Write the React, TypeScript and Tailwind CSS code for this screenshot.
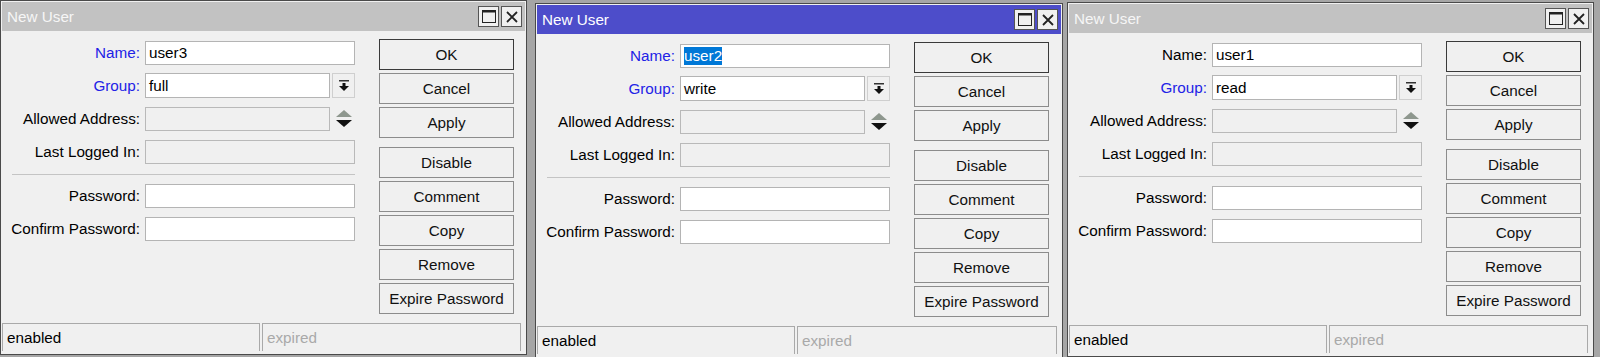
import React from 'react'

type WindowProps = {
  name: string
  group: string
  nameBlue?: boolean
  active?: boolean
  selected?: boolean
  className?: string
}

function MaximizeIcon() {
  return (
    <svg width="14" height="13" viewBox="0 0 14 13">
      <rect x="0.5" y="0.5" width="13" height="12" fill="none" stroke="#222" strokeWidth="1" />
      <rect x="0" y="0" width="14" height="2.5" fill="#222" />
    </svg>
  )
}

function CloseIcon() {
  return (
    <svg width="12" height="12" viewBox="0 0 12 12">
      <path d="M1 1 L11 11 M11 1 L1 11" stroke="#222" strokeWidth="1.8" />
    </svg>
  )
}

function DropIcon() {
  return (
    <svg width="10" height="12" viewBox="0 0 10 12">
      <rect x="0" y="0" width="10" height="1.5" fill="#333" />
      <rect x="3.5" y="3" width="3" height="3" fill="#111" />
      <polygon points="0,6 10,6 5,11" fill="#111" />
    </svg>
  )
}

function SpinIcon() {
  return (
    <svg width="16" height="17" viewBox="0 0 16 17">
      <polygon points="8,0 16,7 0,7" fill="#8e978e" />
      <polygon points="0,10 16,10 8,17" fill="#111" />
    </svg>
  )
}

function Row({ label, blue, children }: { label: string; blue?: boolean; children: React.ReactNode }) {
  return (
    <div className="flex h-[33px] items-center">
      <div className={`w-[138px] text-right ${blue ? 'text-[#2222e6]' : 'text-black'}`}>{label}</div>
      <div className="ml-[5px] flex items-center">{children}</div>
    </div>
  )
}

function Field({ value, disabled, wide = true, selected }: { value?: string; disabled?: boolean; wide?: boolean; selected?: boolean }) {
  return (
    <div
      className={`flex h-[24px] items-center border px-[3px] ${wide ? 'w-[210px]' : 'w-[185px]'} ${
        disabled ? 'border-[#b9b9b9] bg-[#f0f0f0]' : 'border-[#b4b4b4] bg-white'
      }`}
    >
      {value && (
        <span className={selected ? 'bg-[#0078d7] text-white' : 'text-black'}>{value}</span>
      )}
    </div>
  )
}

function Btn({ label, primary }: { label: string; primary?: boolean }) {
  return (
    <div
      className={`flex h-[31px] w-[135px] items-center justify-center border bg-[#f0f0f0] text-[#111] ${
        primary ? 'border-[#3a3a3a]' : 'border-[#8c8c8c]'
      }`}
    >
      {label}
    </div>
  )
}

function UserWindow({ name, group, nameBlue, active, selected, className }: WindowProps) {
  return (
    <div className={`flex h-[355px] shrink-0 flex-col border border-[#4a4a4a] bg-[#f0f0f0] p-px ${className ?? ''}`}>
      {/* Title bar */}
      <div className={`flex h-[29px] items-center justify-between pl-[5px] pr-[3px] ${active ? 'bg-[#4d4dca] text-white' : 'bg-[#c2c2c2] text-[#f6f6f6]'}`}>
        <span>New User</span>
        <div className="flex gap-[2px]">
          <div className="flex h-[21px] w-[21px] items-center justify-center border border-[#555] bg-[#f0f0f0]">
            <MaximizeIcon />
          </div>
          <div className="flex h-[21px] w-[21px] items-center justify-center border border-[#555] bg-[#f0f0f0]">
            <CloseIcon />
          </div>
        </div>
      </div>

      {/* Body */}
      <div className="flex flex-1">
        <div className="pt-[5px]">
          <Row label="Name:" blue={nameBlue}>
            <Field value={name} selected={selected} />
          </Row>
          <Row label="Group:" blue>
            <div className="flex h-[25px] gap-[2px]">
              <div className="flex h-[25px] w-[185px] items-center border border-[#b4b4b4] bg-white px-[3px]">{group}</div>
              <div className="flex h-[25px] w-[23px] items-center justify-center border border-[#cfcfcf] bg-[#f0f0f0]">
                <DropIcon />
              </div>
            </div>
          </Row>
          <Row label="Allowed Address:">
            <div className="flex gap-[2px]">
              <Field disabled wide={false} />
              <div className="flex h-[24px] w-[23px] items-center justify-center">
                <SpinIcon />
              </div>
            </div>
          </Row>
          <Row label="Last Logged In:">
            <Field disabled />
          </Row>
          <div className="pb-[4px] pl-[10px] pt-[6px]">
            <div className="h-px w-[343px] bg-[#c4c4c4]" />
          </div>
          <Row label="Password:">
            <Field />
          </Row>
          <Row label="Confirm Password:">
            <Field />
          </Row>
        </div>

        <div className="ml-[24px] flex flex-col pt-[8px]">
          <div className="flex flex-col gap-[3px]">
            <Btn label="OK" primary />
            <Btn label="Cancel" />
            <Btn label="Apply" />
          </div>
          <div className="mt-[9px] flex flex-col gap-[3px]">
            <Btn label="Disable" />
            <Btn label="Comment" />
            <Btn label="Copy" />
            <Btn label="Remove" />
            <Btn label="Expire Password" />
          </div>
        </div>
      </div>

      {/* Status bar */}
      <div className="mb-[2px] flex h-[28px] pr-[4px]">
        <div className="flex w-[258px] items-center border border-b-0 border-[#a9a9a9] px-[4px] text-black">enabled</div>
        <div className="ml-[2px] flex flex-1 items-center border border-b-0 border-[#a9a9a9] px-[4px] text-[#a9a9a9]">expired</div>
      </div>
    </div>
  )
}

export default function App() {
  return (
    <div className="flex h-[357px] w-[1600px] items-start overflow-hidden bg-[#a6a6a6] font-['Liberation_Sans',Arial,sans-serif] text-[15.25px] leading-[18px]">
      <UserWindow className="w-[527px]" name="user3" group="full" nameBlue />
      <UserWindow className="ml-[8px] mt-[3px] w-[528px]" name="user2" group="write" nameBlue active selected />
      <UserWindow className="ml-[4px] mt-[2px] w-[527px]" name="user1" group="read" />
    </div>
  )
}
